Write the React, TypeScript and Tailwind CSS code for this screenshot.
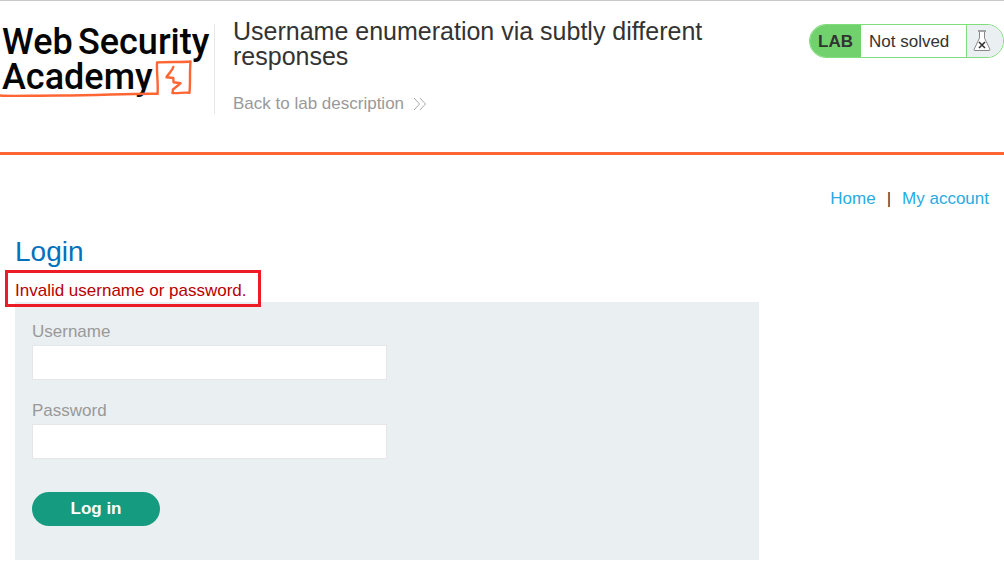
import React from "react";

function AcademyLogo() {
  return (
    <svg
      role="img"
      aria-label="Web Security Academy"
      viewBox="0 0 214 92"
      className="block h-[92px] w-[214px] shrink-0 overflow-visible"
    >
      <g fontFamily="Roboto, sans-serif" fontSize="36" fontWeight="500" fill="#050505">
        <text x="2" y="30">Web</text>
        <text x="78" y="30">Security</text>
        <text x="2" y="65">Academy</text>
      </g>
      <g fill="none" stroke="#ff6633" strokeLinecap="round" strokeLinejoin="round">
        <path d="M0 71.5 C8 72.5 30 71.5 60 71.5 C100 71.5 125 69.500 157.500 69.800" strokeWidth="2.400" />
        <path
          d="M157.500 69.800 C158.500 60 156.500 50 157 38.500 C168 37.500 180 38.500 190.500 37.500 C189.500 48 190.500 58 189.500 68.800 C184 68 178 69.500 172.500 69 L173 65.500 L180.500 59.300 L173.500 58.300 L173.300 54 L166.500 53.300 C168 50 172 47.500 173.300 43"
          strokeWidth="2.400"
        />
      </g>
    </svg>
  );
}

function FlaskIcon() {
  return (
    <svg viewBox="0 0 18 22" aria-hidden="true" className="h-[22px] w-[18px]">
      <path
        d="M6.500 1.500 V8 L1 19.500 Q0.700 20.500 2 20.500 H16 Q17.300 20.500 17 19.500 L11.500 8 V1.500"
        fill="#fff"
        stroke="#888"
      />
      <path d="M5 1 H13" stroke="#888" strokeWidth="1.400" />
      <path d="M6 12 L12 18 M12 12 L6 18" stroke="#333" strokeWidth="1.600" />
    </svg>
  );
}

function LabStatus() {
  return (
    <div className="flex h-[34px] shrink-0 items-stretch overflow-hidden rounded-full border border-[#80dc7c] bg-white text-[17px]">
      <strong className="flex w-[51px] items-center justify-center bg-[#71d26d] pt-[2px] text-[#333]">
        LAB
      </strong>
      <span className="flex w-[105px] items-center pt-[2px] pl-2">Not solved</span>
      <span className="flex w-[37px] items-center border-l border-[#80dc7c] bg-[#eaeff2] pl-[6px]">
        <FlaskIcon />
      </span>
    </div>
  );
}

function Field({ id, label, type }: { id: string; label: string; type: string }) {
  return (
    <div className="flex flex-col">
      <label htmlFor={id} className="pb-[3px] leading-5 text-[#999]">
        {label}
      </label>
      <input
        id={id}
        name={id}
        type={type}
        className="h-[35px] w-full max-w-[355px] border border-[#e4e6e8] bg-white px-2 text-[#333]"
      />
    </div>
  );
}

export default function App() {
  return (
    <div className="border-t border-[#c8c8c8] bg-white font-['Liberation_Sans',Arial,sans-serif] text-[17px] text-[#333]">
      <header className="flex items-start border-b-[3px] border-[#ff6633] pt-[23px] pb-9">
        <AcademyLogo />
        <div className="flex min-w-0 flex-1 items-start justify-between border-l border-[#e6e6e6] pl-[18px]">
          <div className="min-w-0 max-w-[520px]">
            <h1 className="-mt-[5px] text-[25px] leading-[25px]">
              Username enumeration via subtly different responses
            </h1>
            <a
              href="#description"
              className="mt-[25px] flex w-fit items-center gap-[9px] leading-5 text-[#999]"
            >
              Back to lab description
              <svg viewBox="0 0 14 14" aria-hidden="true" className="size-[14px]">
                <path d="M1 1 L6.500 7 L1 13 M7 1 L12.500 7 L7 13" fill="none" stroke="#aaa" />
              </svg>
            </a>
          </div>
          <LabStatus />
        </div>
      </header>

      <main className="px-[15px] pt-8">
        <nav className="flex justify-end gap-[11px] leading-6">
          <a href="#home" className="text-[#29abe2]">Home</a>
          <span>|</span>
          <a href="#account" className="text-[#29abe2]">My account</a>
        </nav>

        <h2 className="mt-[25px] text-[28px] leading-8 text-[#0071bc]">Login</h2>

        <section className="w-full max-w-[744px]">
          <p
            role="alert"
            className="relative -ml-[10px] mt-[2px] -mb-[5px] flex h-[37px] w-fit items-center border-[3px] border-[#ed1c24] pr-[11px] pl-[7px] pt-1 text-[#b90000]"
          >
            Invalid username or password.
          </p>
          <form
            onSubmit={(event) => event.preventDefault()}
            className="flex flex-col gap-[21px] bg-[#eaeff2] px-[17px] pt-5 pb-[34px]"
          >
            <Field id="username" label="Username" type="text" />
            <Field id="password" label="Password" type="password" />
            <button
              type="submit"
              className="mt-3 h-[34px] w-32 rounded-full bg-[#159b80] font-bold text-white"
            >
              Log in
            </button>
          </form>
        </section>
      </main>
    </div>
  );
}
